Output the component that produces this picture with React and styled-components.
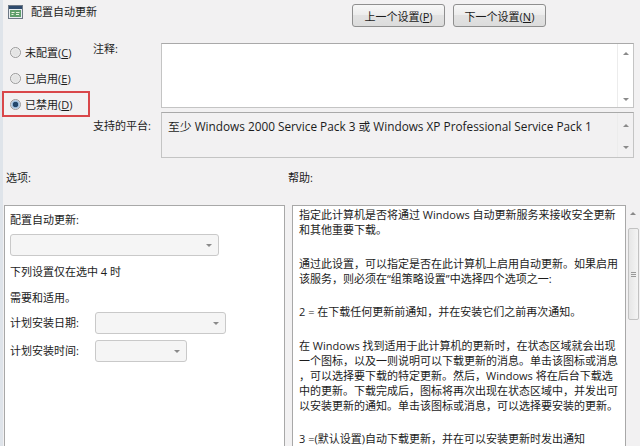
import React from "react";
import styled, { createGlobalStyle } from "styled-components";

const GlobalStyle = createGlobalStyle`
  html, body {
    margin: 0;
    padding: 0;
    background: #f2f1f2;
  }
  body {
    font-family: "Open Sans", "Noto Sans CJK SC", sans-serif;
  }
`;

const Page = styled.div`
  width: 640px;
  height: 446px;
  overflow: hidden;
  background: #f2f1f2;
  box-shadow: inset 3px 0 0 #dfe4ea;
  color: #1c1c1c;
  font-size: 11px;
`;

const Header = styled.div`
  display: flex;
  height: 39px;
  box-sizing: border-box;
  padding: 4px 0 0 8px;
`;

const TitleBlock = styled.div`
  width: 344px;
  height: 14px;
  margin-top: 1px;
  display: flex;
  align-items: center;
  gap: 8px;
  line-height: 12px;
`;

const ButtonRow = styled.div`
  display: flex;
  gap: 8px;
`;

const NavButton = styled.button`
  width: 93px;
  height: 23px;
  padding: 0;
  border: 1px solid #8f8f8f;
  border-radius: 3px;
  background: linear-gradient(#f7f7f7, #ececec 50%, #e2e2e2 50%, #dcdcdc);
  font-family: inherit;
  font-size: 11px;
  color: #1c1c1c;
  u {
    text-decoration: underline;
  }
`;

const TopSection = styled.div`
  display: flex;
`;

const RadioColumn = styled.div`
  width: 93px;
  padding-left: 2px;
  box-sizing: border-box;
  display: flex;
  flex-direction: column;
`;

const RadioRow = styled.div`
  width: 88px;
  height: 26px;
  box-sizing: border-box;
  border: 2px solid ${(props) => (props.marked ? "#d9474a" : "transparent")};
  padding-left: 6px;
  display: flex;
  align-items: center;
  gap: 4px;
`;

const RadioDot = styled.span`
  width: 11px;
  height: 11px;
  box-sizing: border-box;
  border-radius: 50%;
  border: 1px solid #9a9a9a;
  background: ${(props) =>
    props.checked
      ? "radial-gradient(circle, #23476b 0 2.5px, #8fb4d6 3px, #e8eef4 5px)"
      : "radial-gradient(circle, #e4e4e4 0 3px, #f8f8f8 5px)"};
`;

const FieldGrid = styled.div`
  display: grid;
  grid-template-columns: 68px 473px;
  row-gap: 4px;
  padding-top: 4px;
`;

const FieldLabel = styled.div`
  line-height: 12px;
  padding-top: ${(props) => props.offset}px;
`;

const Box = styled.div`
  height: ${(props) => props.h}px;
  box-sizing: border-box;
  border: 1px solid #c4c4c4;
  border-top-color: #a9a9a9;
  background: ${(props) => (props.readOnly ? "#f2f1f2" : "#fff")};
  display: flex;
`;

const BoxText = styled.div`
  flex: 1;
  padding: 6px 6px 0;
  font-size: 11.8px;
  line-height: 15px;
  white-space: nowrap;
  overflow: hidden;
`;

const ScrollTrack = styled.div`
  width: 15px;
  border-left: 1px solid #ececec;
  display: flex;
  flex-direction: column;
  justify-content: space-between;
  align-items: center;
  padding: ${(props) => props.pad};
`;

const Arrow = styled.span`
  width: 0;
  height: 0;
  border-left: 3px solid transparent;
  border-right: 3px solid transparent;
  ${(props) =>
    props.down
      ? "border-top: 3px solid #8a8a8a;"
      : "border-bottom: 3px solid #8a8a8a;"}
`;

const SectionLabels = styled.div`
  height: 47px;
  box-sizing: border-box;
  padding-top: 14px;
  display: grid;
  grid-template-columns: 288px 1fr;
  line-height: 12px;
  span:first-child {
    padding-left: 6px;
  }
`;

const BottomSection = styled.div`
  display: grid;
  grid-template-columns: 281px 348px;
  column-gap: 7px;
  padding-left: 4px;
`;

const OptionsPanel = styled.div`
  height: 260px;
  box-sizing: border-box;
  border: 1px solid #a8a8a8;
  background: #fff;
  padding: 8px 0 0 5px;
  line-height: 12px;
`;

const OptionText = styled.div`
  margin-top: ${(props) => props.gap || 0}px;
`;

const Combo = styled.div`
  width: ${(props) => props.w}px;
  height: 22px;
  box-sizing: border-box;
  margin-top: ${(props) => props.gap || 0}px;
  border: 1px solid #c9c9c9;
  border-radius: 3px;
  background: #f5f5f5;
  display: flex;
  align-items: center;
  justify-content: flex-end;
  padding-right: 6px;
`;

const FieldRow = styled.div`
  display: flex;
  align-items: center;
  margin-top: ${(props) => props.gap}px;
`;

const FieldName = styled.span`
  width: 85px;
`;

const HelpPanel = styled.div`
  display: flex;
  height: 260px;
`;

const HelpText = styled.div`
  width: 334px;
  box-sizing: border-box;
  border: 1px solid #a8a8a8;
  background: #fff;
  padding: 1px 0 0 6px;
  line-height: 15px;
  white-space: nowrap;
  overflow: hidden;
`;

const HelpPara = styled.div`
  margin-bottom: 18.5px;
`;

const HelpScroll = styled.div`
  width: 14px;
  display: flex;
  flex-direction: column;
  align-items: center;
  padding-top: 7px;
  gap: 13px;
`;

const Thumb = styled.div`
  width: 11px;
  height: 92px;
  box-sizing: border-box;
  border: 1px solid #c2c2c2;
  border-radius: 2px;
  background: linear-gradient(90deg, #e6e6e6, #f4f4f4);
  display: flex;
  align-items: center;
  justify-content: center;
  &::after {
    content: "";
    width: 5px;
    height: 5px;
    background: repeating-linear-gradient(#9a9a9a 0 1px, transparent 1px 2px);
  }
`;

const PolicyIcon = () => (
  <svg width="15" height="14" viewBox="0 0 15 14">
    <rect x="0.5" y="0.5" width="14" height="13" fill="#e9edf1" stroke="#6d7885" />
    <rect x="1" y="1" width="13" height="3" fill="#2f4a6d" />
    <rect x="2" y="5" width="11" height="7" fill="#5f9e6b" />
    <path d="M3.5 7.5h3M3.5 9.5h2M8 7.5h3.5M8 9.5h3" stroke="#e8f2e0" strokeWidth="1" />
  </svg>
);

const helpParas = [
  ["指定此计算机是否将通过 Windows 自动更新服务来接收安全更新", "和其他重要下载。"],
  [
    "通过此设置，可以指定是否在此计算机上启用自动更新。如果启用",
    "该服务，则必须在“组策略设置”中选择四个选项之一:",
  ],
  ["2 = 在下载任何更新前通知，并在安装它们之前再次通知。"],
  [
    "在 Windows 找到适用于此计算机的更新时，在状态区域就会出现",
    "一个图标，以及一则说明可以下载更新的消息。单击该图标或消息",
    "，可以选择要下载的特定更新。然后，Windows 将在后台下载选",
    "中的更新。下载完成后，图标将再次出现在状态区域中，并发出可",
    "以安装更新的通知。单击该图标或消息，可以选择要安装的更新。",
  ],
  ["3 =(默认设置)自动下载更新，并在可以安装更新时发出通知"],
];

export default function App() {
  return (
    <>
      <GlobalStyle />
      <Page>
        <Header>
          <TitleBlock>
            <PolicyIcon />
            <span>配置自动更新</span>
          </TitleBlock>
          <ButtonRow>
            <NavButton>
              上一个设置(<u>P</u>)
            </NavButton>
            <NavButton>
              下一个设置(<u>N</u>)
            </NavButton>
          </ButtonRow>
        </Header>

        <TopSection>
          <RadioColumn>
            <RadioRow>
              <RadioDot />
              <span>
                未配置(<u>C</u>)
              </span>
            </RadioRow>
            <RadioRow>
              <RadioDot />
              <span>
                已启用(<u>E</u>)
              </span>
            </RadioRow>
            <RadioRow marked>
              <RadioDot checked />
              <span>
                已禁用(<u>D</u>)
              </span>
            </RadioRow>
          </RadioColumn>

          <FieldGrid>
            <FieldLabel offset={0}>注释:</FieldLabel>
            <Box h={65}>
              <BoxText />
              <ScrollTrack pad="8px 0 6px">
                <Arrow />
                <Arrow down />
              </ScrollTrack>
            </Box>
            <FieldLabel offset={8}>支持的平台:</FieldLabel>
            <Box h={46} readOnly>
              <BoxText>
                至少 Windows 2000 Service Pack 3 或 Windows XP Professional Service Pack 1
              </BoxText>
              <ScrollTrack pad="11px 0 8px">
                <Arrow />
                <Arrow down />
              </ScrollTrack>
            </Box>
          </FieldGrid>
        </TopSection>

        <SectionLabels>
          <span>选项:</span>
          <span>帮助:</span>
        </SectionLabels>

        <BottomSection>
          <OptionsPanel>
            <OptionText>配置自动更新:</OptionText>
            <Combo w={209} gap={8}>
              <Arrow down />
            </Combo>
            <OptionText gap={10}>下列设置仅在选中 4 时</OptionText>
            <OptionText gap={14}>需要和适用。</OptionText>
            <FieldRow gap={8}>
              <FieldName>计划安装日期:</FieldName>
              <Combo w={131}>
                <Arrow down />
              </Combo>
            </FieldRow>
            <FieldRow gap={6}>
              <FieldName>计划安装时间:</FieldName>
              <Combo w={92}>
                <Arrow down />
              </Combo>
            </FieldRow>
          </OptionsPanel>

          <HelpPanel>
            <HelpText>
              {helpParas.map((para, i) => (
                <HelpPara key={i}>
                  {para.map((line, j) => (
                    <div key={j}>{line}</div>
                  ))}
                </HelpPara>
              ))}
            </HelpText>
            <HelpScroll>
              <Arrow />
              <Thumb />
            </HelpScroll>
          </HelpPanel>
        </BottomSection>
      </Page>
    </>
  );
}
